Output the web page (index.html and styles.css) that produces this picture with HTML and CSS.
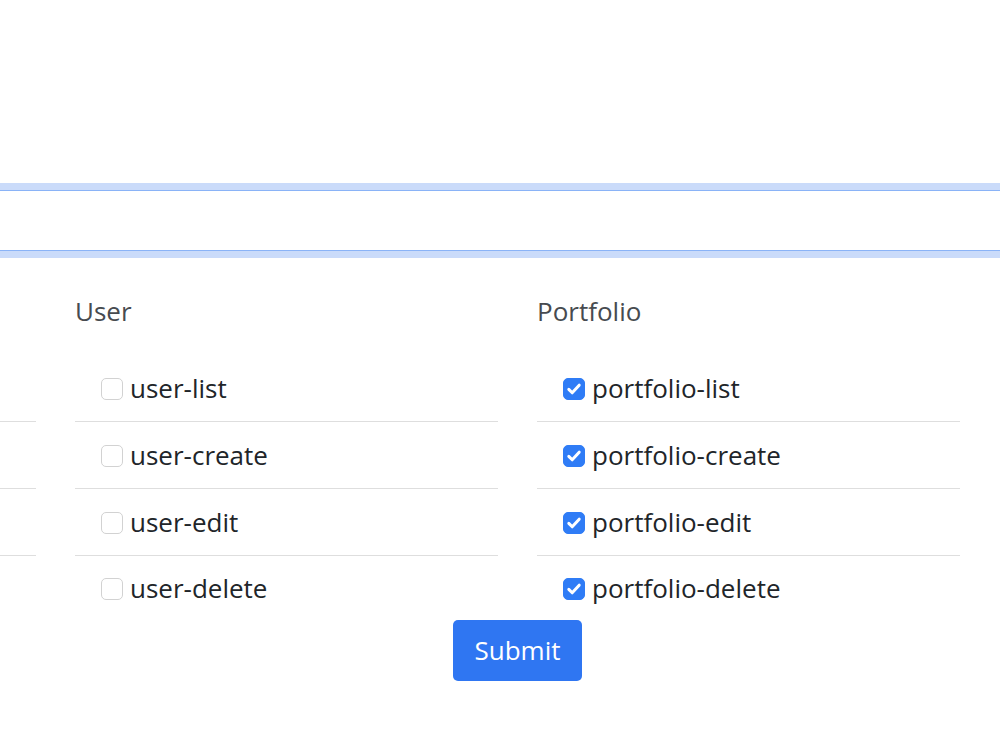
FILE: index.html
```html
<!DOCTYPE html>
<html>
<head>
    <title>Role permissions</title>
    <link rel="stylesheet" href="styles.css">
</head>
<body>
    <form class="role-form">
        <input type="text" class="role-name" name="name" autofocus>

        <div class="groups">
            <div class="group">
                <h3 class="group-title">Role</h3>
                <ul class="perm-list">
                    <li><label><input type="checkbox" name="perm" value="role-list">role-list</label></li>
                    <li><label><input type="checkbox" name="perm" value="role-create">role-create</label></li>
                    <li><label><input type="checkbox" name="perm" value="role-edit">role-edit</label></li>
                    <li><label><input type="checkbox" name="perm" value="role-delete">role-delete</label></li>
                </ul>
            </div>

            <div class="group">
                <h3 class="group-title">User</h3>
                <ul class="perm-list">
                    <li><label><input type="checkbox" name="perm" value="user-list">user-list</label></li>
                    <li><label><input type="checkbox" name="perm" value="user-create">user-create</label></li>
                    <li><label><input type="checkbox" name="perm" value="user-edit">user-edit</label></li>
                    <li><label><input type="checkbox" name="perm" value="user-delete">user-delete</label></li>
                </ul>
            </div>

            <div class="group">
                <h3 class="group-title">Portfolio</h3>
                <ul class="perm-list">
                    <li><label><input type="checkbox" name="perm" value="portfolio-list" checked>portfolio-list</label></li>
                    <li><label><input type="checkbox" name="perm" value="portfolio-create" checked>portfolio-create</label></li>
                    <li><label><input type="checkbox" name="perm" value="portfolio-edit" checked>portfolio-edit</label></li>
                    <li><label><input type="checkbox" name="perm" value="portfolio-delete" checked>portfolio-delete</label></li>
                </ul>
            </div>
        </div>

        <div class="actions">
            <button type="submit" class="btn-submit">Submit</button>
        </div>
    </form>
</body>
</html>
```

FILE: styles.css
```css
html, body {
    overflow: hidden;
}

body {
    font-family: "Open Sans", "Liberation Sans", sans-serif;
    font-size: 26px;
    color: #212529;
    background-color: #ffffff;
    margin: 0;
    padding: 0;
}

.role-form {
    padding-top: 190px;
}

/* name field, shown focused */
.role-name {
    display: block;
    box-sizing: border-box;
    width: calc(100% + 40px);
    height: 61px;
    margin: 0 0 0 -20px;
    border: 1px solid #8ab3f7;
    box-shadow: 0 0 0 7px #cadbfa;
    outline: none;
    background: #ffffff;
}

.groups {
    display: grid;
    grid-template-columns: repeat(3, 423px);
    column-gap: 39px;
    margin-left: -387px;
    margin-top: 36px;
}

.group-title {
    font-size: 26px;
    font-weight: normal;
    color: #474b50;
    line-height: 48px;
    margin: 0 0 20px 0;
}

.perm-list {
    list-style: none;
    margin: 0;
    padding: 0;
}

.perm-list li {
    height: 66px;
    border-bottom: 1px solid #dedede;
    display: flex;
    align-items: center;
    padding-left: 26px;
}

.perm-list li:last-child {
    border-bottom: none;
    height: 64px;
}

.perm-list label {
    display: flex;
    align-items: center;
    font-size: 26px;
    line-height: 1;
}

input[type="checkbox"] {
    appearance: none;
    -webkit-appearance: none;
    width: 22px;
    height: 22px;
    margin: 1px 7px 0 0;
    border: 1px solid #d2d2d2;
    border-radius: 5px;
    background-color: #ffffff;
    box-sizing: border-box;
}

input[type="checkbox"]:checked {
    border-color: #2f7cf6;
    background-color: #2f7cf6;
    background-image: url("data:image/svg+xml,%3Csvg xmlns='http://www.w3.org/2000/svg' viewBox='0 0 20 20'%3E%3Cpath d='M4.8 10.4l3.4 3.4L15.2 6.2' fill='none' stroke='%23fff' stroke-width='3' stroke-linecap='round' stroke-linejoin='round'/%3E%3C/svg%3E");
    background-size: 100% 100%;
}

.actions {
    padding-left: 35px;
    display: flex;
    justify-content: center;
}

.btn-submit {
    font-family: inherit;
    font-size: 26px;
    line-height: 39px;
    color: #ffffff;
    background-color: #2f76f2;
    border: none;
    border-radius: 5px;
    padding: 11px 21px;
    cursor: pointer;
}
```
